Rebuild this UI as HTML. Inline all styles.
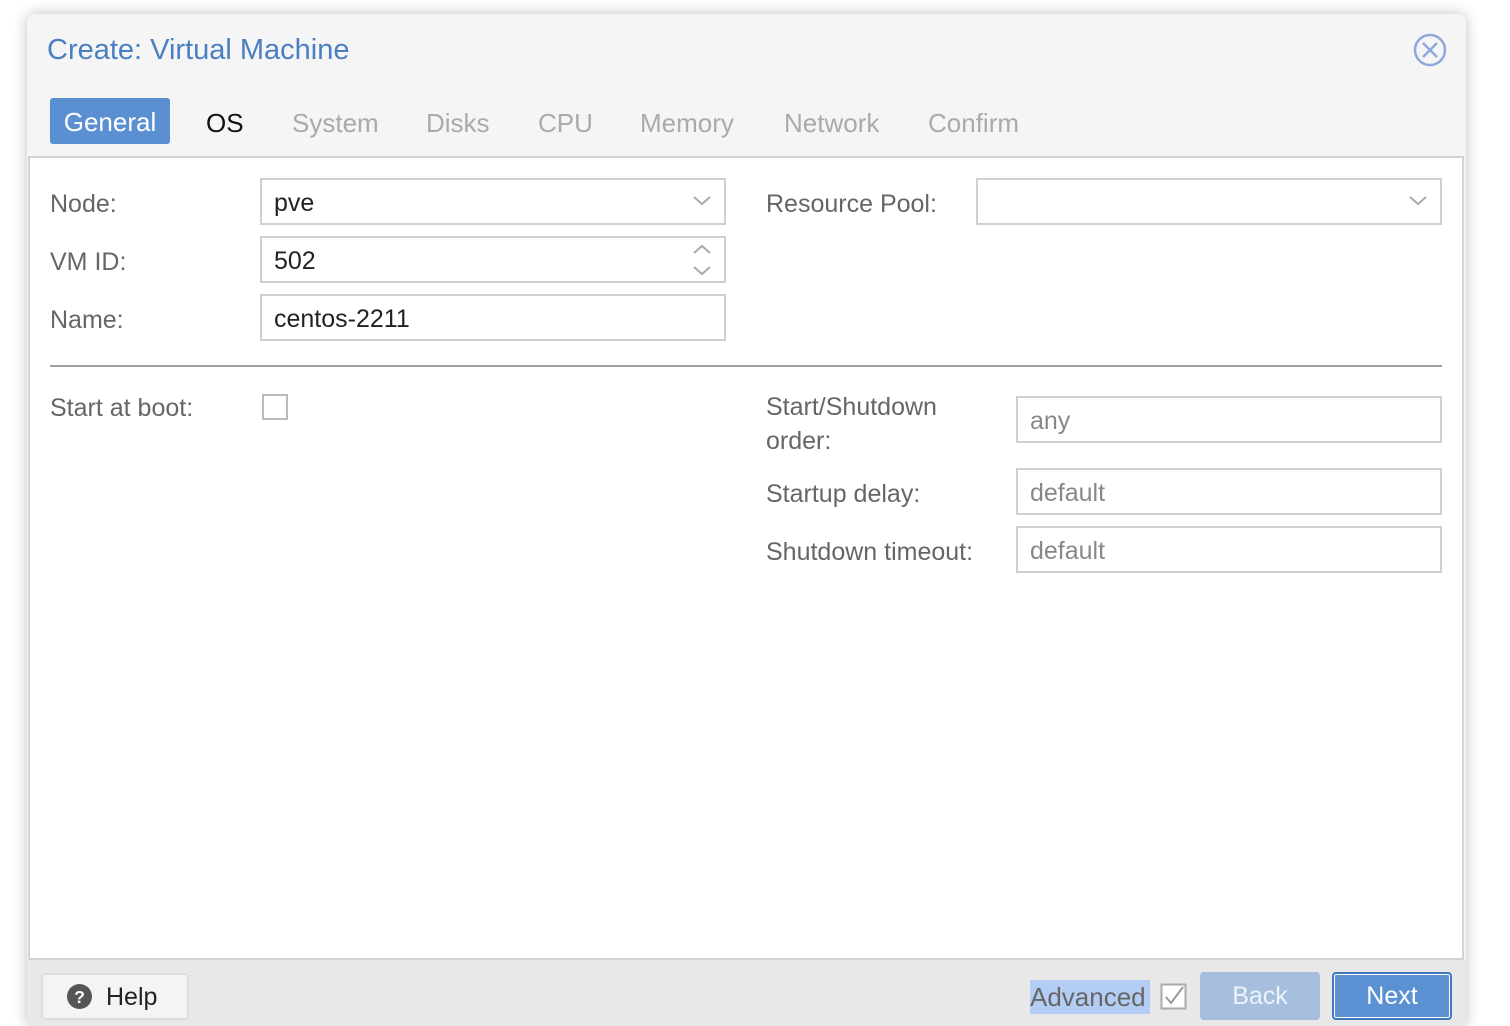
<!DOCTYPE html>
<html style="overflow:hidden;height:1026px"><head><meta charset="utf-8"><style>
*{box-sizing:border-box;margin:0;padding:0}
body{width:1510px;height:1026px;background:#fff;font-family:"Liberation Sans",Helvetica,sans-serif;position:relative;overflow:hidden;color:#555}
.win{position:absolute;left:27px;top:14px;width:1439px;height:1012px;background:#f5f5f5;border-radius:8px 8px 0 0;box-shadow:0 0 14px rgba(0,0,0,.25)}
.a{position:absolute;white-space:nowrap}
.title{left:47px;top:34px;font-size:29px;color:#4a7fc1}
.tab{top:108px;font-size:26px;color:#aaa}
.gen{left:50px;top:98px;width:120px;height:46px;background:#5a8fd2;border-radius:3px;color:#fff;font-size:26px;text-align:center;line-height:48px}
.panel{position:absolute;left:28px;top:156px;width:1436px;height:804px;background:#fff;border:2px solid #d3d3d3}
.lbl{font-size:25px;color:#666}
.inp{position:absolute;border:2px solid #d0d0d0;background:#fff;height:47px;font-size:25px;line-height:47px;padding-left:12px;color:#222}
.ph{color:#888}
.foot{position:absolute;left:27px;top:960px;width:1439px;height:66px;background:#e8e8e8}
</style></head><body>
<div class="win"></div>
<div class="a title">Create: Virtual Machine</div>
<svg class="a" style="left:1412px;top:32px" width="36" height="36" viewBox="0 0 36 36"><circle cx="18" cy="18" r="15" fill="none" stroke="#8fa8dc" stroke-width="2.5"/><path d="M11 11L25 25M25 11L11 25" stroke="#8fa8dc" stroke-width="2.5"/></svg>
<div class="a gen">General</div>
<div class="a tab" style="left:206px;color:#111">OS</div>
<div class="a tab" style="left:292px">System</div>
<div class="a tab" style="left:426px">Disks</div>
<div class="a tab" style="left:538px">CPU</div>
<div class="a tab" style="left:640px">Memory</div>
<div class="a tab" style="left:784px">Network</div>
<div class="a tab" style="left:928px">Confirm</div>
<div class="panel"></div>
<div class="a lbl" style="left:50px;top:190px">Node:</div>
<div class="inp" style="left:260px;top:178px;width:466px">pve</div>
<svg class="a" style="left:692px;top:195px" width="20" height="12"><path d="M2 2L10 9L18 2" fill="none" stroke="#aaa" stroke-width="2"/></svg>
<div class="a lbl" style="left:50px;top:248px">VM ID:</div>
<div class="inp" style="left:260px;top:236px;width:466px">502</div>
<svg class="a" style="left:692px;top:243px" width="20" height="34"><path d="M2 10L10 3L18 10M2 24L10 31L18 24" fill="none" stroke="#aaa" stroke-width="2"/></svg>
<div class="a lbl" style="left:50px;top:306px">Name:</div>
<div class="inp" style="left:260px;top:294px;width:466px">centos-2211</div>
<div class="a lbl" style="left:766px;top:190px">Resource Pool:</div>
<div class="inp" style="left:976px;top:178px;width:466px"></div>
<svg class="a" style="left:1408px;top:195px" width="20" height="12"><path d="M2 2L10 9L18 2" fill="none" stroke="#aaa" stroke-width="2"/></svg>
<div class="a" style="left:50px;top:365px;width:1392px;height:2px;background:#a0a0a0"></div>
<div class="a lbl" style="left:50px;top:394px">Start at boot:</div>
<div class="a" style="left:262px;top:394px;width:26px;height:26px;border:2px solid #bbb;background:#fff"></div>
<div class="a lbl" style="left:766px;top:390px;line-height:34px">Start/Shutdown<br>order:</div>
<div class="inp ph" style="left:1016px;top:396px;width:426px">any</div>
<div class="a lbl" style="left:766px;top:480px">Startup delay:</div>
<div class="inp ph" style="left:1016px;top:468px;width:426px">default</div>
<div class="a lbl" style="left:766px;top:538px">Shutdown timeout:</div>
<div class="inp ph" style="left:1016px;top:526px;width:426px">default</div>
<div class="foot"></div>
<div class="a" style="left:41px;top:973px;width:148px;height:47px;background:#f4f4f4;border:2px solid #ddd;border-radius:4px"></div>
<svg class="a" style="left:67px;top:984px" width="25" height="25" viewBox="0 0 24 24"><circle cx="12" cy="12" r="12" fill="#555"/><text x="12" y="18" font-size="17" font-weight="bold" text-anchor="middle" fill="#fff" font-family="Liberation Sans">?</text></svg>
<div class="a" style="left:106px;top:983px;font-size:25px;color:#222">Help</div>
<div class="a" style="left:1030px;top:980px;width:120px;height:34px;background:#b3cdf4"></div>
<div class="a" style="left:1030px;top:982px;font-size:26px;color:#666">Advanced</div>
<svg class="a" style="left:1160px;top:983px" width="28" height="28"><rect x="1.5" y="1.5" width="24" height="24" fill="#fff" stroke="#aaa" stroke-width="2"/><path d="M6 14L11 20L23 4" fill="none" stroke="#999" stroke-width="2"/></svg>
<div class="a" style="left:1200px;top:972px;width:120px;height:48px;background:#a6bfdf;border-radius:4px;color:#eef3fa;font-size:25px;text-align:center;line-height:48px">Back</div>
<div class="a" style="left:1332px;top:972px;width:120px;height:48px;background:#5b90d2;border:2px solid #3e78c2;box-shadow:inset 0 0 0 1px #fff;border-radius:4px;color:#fff;font-size:25px;text-align:center;line-height:44px">Next</div>
</body></html>
